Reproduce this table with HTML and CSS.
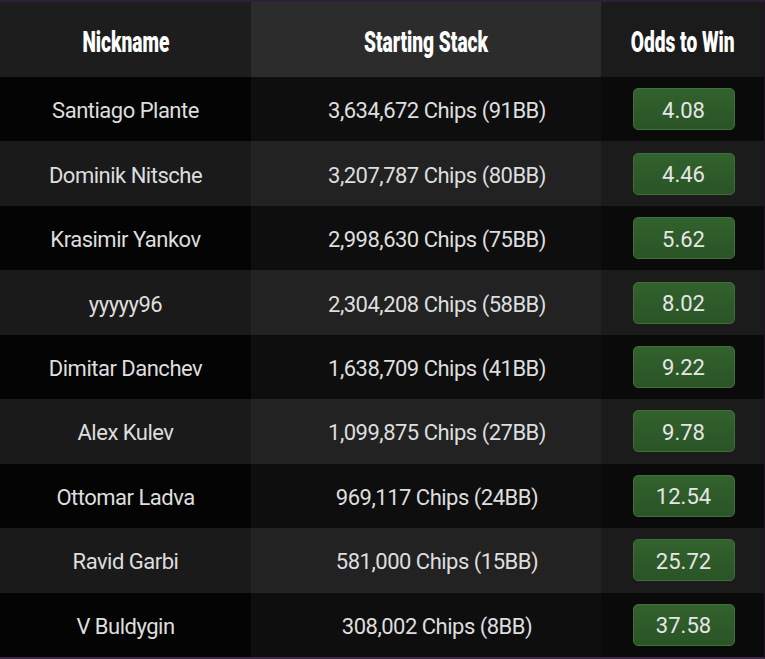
FILE: index.html
```html
<!DOCTYPE html>
<html>
<head>
<meta charset="utf-8">
<link rel="stylesheet" href="styles.css">
</head>
<body>
<div class="board">
  <div class="row head">
    <div class="cell c1"><span class="ht">Nickname</span></div>
    <div class="cell c2"><span class="ht">Starting Stack</span></div>
    <div class="cell c3"><span class="ht">Odds to Win</span></div>
  </div>
  <div class="row odd">
    <div class="cell c1 txt">Santiago Plante</div>
    <div class="cell c2 txt stack">3,634,672 Chips (91BB)</div>
    <div class="cell c3"><span class="odds">4.08</span></div>
  </div>
  <div class="row even">
    <div class="cell c1 txt">Dominik Nitsche</div>
    <div class="cell c2 txt stack">3,207,787 Chips (80BB)</div>
    <div class="cell c3"><span class="odds">4.46</span></div>
  </div>
  <div class="row odd">
    <div class="cell c1 txt">Krasimir Yankov</div>
    <div class="cell c2 txt stack">2,998,630 Chips (75BB)</div>
    <div class="cell c3"><span class="odds">5.62</span></div>
  </div>
  <div class="row even">
    <div class="cell c1 txt">yyyyy96</div>
    <div class="cell c2 txt stack">2,304,208 Chips (58BB)</div>
    <div class="cell c3"><span class="odds">8.02</span></div>
  </div>
  <div class="row odd">
    <div class="cell c1 txt">Dimitar Danchev</div>
    <div class="cell c2 txt stack">1,638,709 Chips (41BB)</div>
    <div class="cell c3"><span class="odds">9.22</span></div>
  </div>
  <div class="row even">
    <div class="cell c1 txt">Alex Kulev</div>
    <div class="cell c2 txt stack">1,099,875 Chips (27BB)</div>
    <div class="cell c3"><span class="odds">9.78</span></div>
  </div>
  <div class="row odd">
    <div class="cell c1 txt">Ottomar Ladva</div>
    <div class="cell c2 txt stack">969,117 Chips (24BB)</div>
    <div class="cell c3"><span class="odds">12.54</span></div>
  </div>
  <div class="row even">
    <div class="cell c1 txt">Ravid Garbi</div>
    <div class="cell c2 txt stack">581,000 Chips (15BB)</div>
    <div class="cell c3"><span class="odds">25.72</span></div>
  </div>
  <div class="row odd">
    <div class="cell c1 txt">V Buldygin</div>
    <div class="cell c2 txt stack">308,002 Chips (8BB)</div>
    <div class="cell c3"><span class="odds">37.58</span></div>
  </div>
</div>
</body>
</html>
```

FILE: styles.css
```css
html, body {
  margin: 0;
  padding: 0;
  background: #2a1c33;
}

body {
  width: 765px;
  height: 659px;
  overflow: hidden;
  font-family: Roboto, "Liberation Sans", sans-serif;
}

.board {
  box-sizing: border-box;
  width: 765px;
  height: 659px;
  border-top: 2px solid #2c1d38;
  border-bottom: 2px solid #3a2a45;
  border-right: 1px solid #1d1424;
  display: grid;
  grid-template-rows: 75px repeat(9, 1fr);
  background: #000;
}

.row {
  display: grid;
  grid-template-columns: 251px 350px 1fr;
}

.cell {
  display: flex;
  align-items: center;
  justify-content: center;
  color: #dedede;
  font-size: 22px;
  white-space: nowrap;
}

.txt {
  letter-spacing: -0.5px;
  padding-top: 3px;
}

.stack {
  padding-left: 22px;
}

.head .cell { color: #ffffff; }
.head .c1 { background: #1d1d1d; }
.head .c2 { background: #2c2c2c; }
.head .c3 { background: #1b1b1b; }

.odd .c1 { background: #040404; }
.odd .c2 { background: #0e0e0e; }
.odd .c3 { background: #0a0a0a; }

.even .c1 { background: #1a1a1a; }
.even .c2 { background: #222222; }
.even .c3 { background: #1b1b1b; }

.ht {
  display: inline-block;
  font-weight: 900;
  font-size: 29px;
  transform: scaleX(0.66);
  padding-top: 4px;
}

.odds {
  box-sizing: border-box;
  width: 102px;
  height: 42px;
  margin-left: 2px;
  display: flex;
  align-items: center;
  justify-content: center;
  padding-top: 2px;
  border-radius: 5px;
  background: linear-gradient(#32622d, #2a5426);
  border: 1px solid #3f7038;
  color: #e6e6e6;
  font-size: 22px;
}
```
